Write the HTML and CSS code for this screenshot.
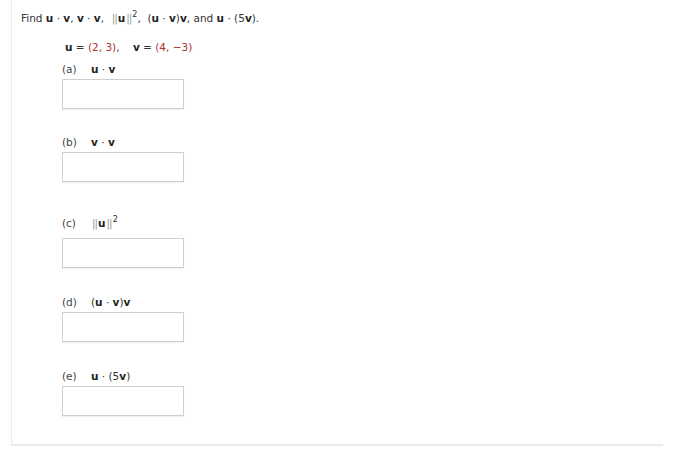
FILE: index.html
```html
<!DOCTYPE html>
<html>
<head>
<meta charset="utf-8">
<link rel="stylesheet" href="styles.css">
</head>
<body>
<div class="frame">
  <p class="prompt">Find <b>u</b> · <b>v</b>, <b>v</b> · <b>v</b>, &nbsp;<span class="bars">||</span><b>u</b><span class="bars">||</span><sup>2</sup>, &nbsp;(<b>u</b> · <b>v</b>)<b>v</b>, and <b>u</b> · (5<b>v</b>).</p>
  <div class="body">
    <p class="given"><b>u</b> = <span class="num">(2, 3)</span>, &nbsp;&nbsp;&nbsp;<b>v</b> = <span class="num">(4, −3)</span></p>
    <div class="part first">
      <div class="label"><span class="tag">(a)</span><span class="expr"><b>u</b> · <b>v</b></span></div>
      <div class="box"></div>
    </div>
    <div class="part second">
      <div class="label"><span class="tag">(b)</span><span class="expr"><b>v</b> · <b>v</b></span></div>
      <div class="box"></div>
    </div>
    <div class="part part-c">
      <div class="label"><span class="tag">(c)</span><span class="expr"><span class="bars">||</span><b>u</b><span class="bars">||</span><sup>2</sup></span></div>
      <div class="box"></div>
    </div>
    <div class="part">
      <div class="label"><span class="tag">(d)</span><span class="expr">(<b>u</b> · <b>v</b>)<b>v</b></span></div>
      <div class="box"></div>
    </div>
    <div class="part">
      <div class="label"><span class="tag">(e)</span><span class="expr"><b>u</b> · (5<b>v</b>)</span></div>
      <div class="box"></div>
    </div>
  </div>
</div>
</body>
</html>
```
FILE: styles.css
```css
html, body {
  margin: 0;
  padding: 0;
  background: #fff;
}
body {
  font-family: "DejaVu Sans", Verdana, sans-serif;
  font-size: 10.5px;
  color: #333;
}
.frame {
  margin-left: 11px;
  width: 651px;
  height: 433px;
  border-left: 1px solid #ececec;
  border-bottom: 2px solid #ebebeb;
  box-sizing: content-box;
  padding-top: 11px;
}
p { margin: 0; }
.prompt {
  padding-left: 9px;
  line-height: 14px;
}
b { font-weight: bold; color: #222; }
sup {
  font-size: 8px;
  line-height: 0;
  vertical-align: 5px;
}
.bars {
  color: #999;
  font-weight: normal;
  letter-spacing: -1px;
  margin: 0 1px;
}
.body {
  padding-left: 50px;
  display: flex;
  flex-direction: column;
}
.given {
  margin-top: 15px;
  padding-left: 3px;
  line-height: 14px;
}
.num { color: #a33; }
.part {
  margin-top: 27px;
  display: flex;
  flex-direction: column;
  gap: 3px;
}
.part.first { margin-top: 8px; }
.part.second { margin-top: 26px; }
.part-c { margin-top: 34px; gap: 8px; }
.label {
  display: flex;
  line-height: 14px;
  height: 14px;
}
.tag { width: 29px; color: #444; }
.box {
  width: 120px;
  height: 28px;
  border: 1px solid #cfcfcf;
  box-shadow: 0 1px 1px rgba(0,0,0,0.06);
  background: #fff;
}
```
